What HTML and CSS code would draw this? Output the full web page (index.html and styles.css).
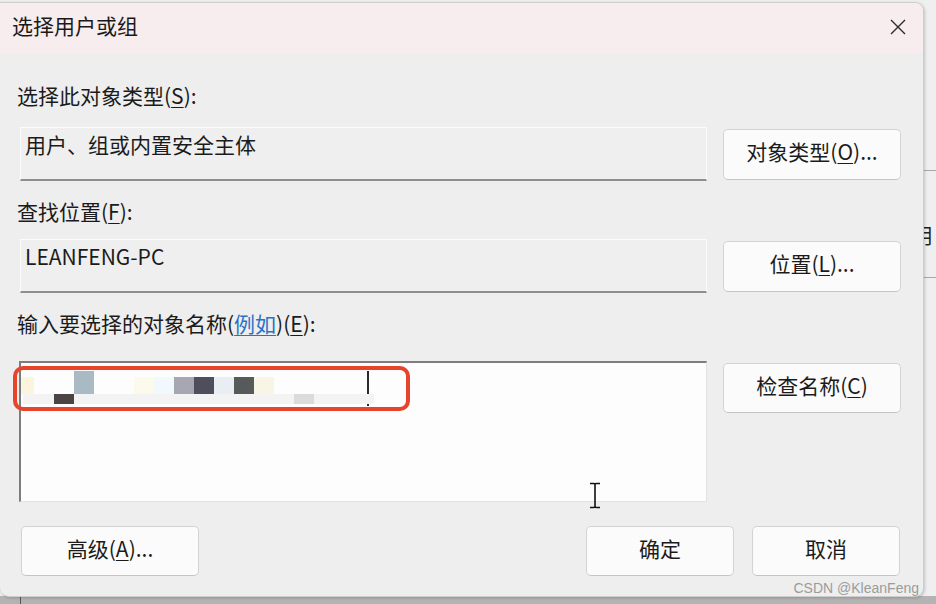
FILE: index.html
```html
<!DOCTYPE html>
<html lang="zh-CN">
<head>
<meta charset="utf-8">
<title>选择用户或组</title>
<link rel="stylesheet" href="styles.css">
</head>
<body>
<div class="desk">
  <div class="backwin">
    <div class="bw-line bw-l1"></div>
    <span class="bw-glyph">用</span>
    <div class="bw-line bw-l2"></div>
  </div>
  <div class="bottom-strip"><div class="bs-mark"></div></div>

  <div class="dialog">
    <div class="titlebar">
      <span class="title">选择用户或组</span>
      <svg class="close" width="18" height="18" viewBox="0 0 18 18"><path d="M2 2 L16 16 M16 2 L2 16" stroke="#2a2a2a" stroke-width="1.4" fill="none"/></svg>
    </div>

    <div class="content">
      <div class="label l1">选择此对象类型(<u>S</u>):</div>
      <div class="row r1">
        <div class="field">用户、组或内置安全主体</div>
        <button class="btn side">对象类型(<u>O</u>)...</button>
      </div>

      <div class="label l2">查找位置(<u>F</u>):</div>
      <div class="row r2">
        <div class="field">LEANFENG-PC</div>
        <button class="btn side">位置(<u>L</u>)...</button>
      </div>

      <div class="label l3">输入要选择的对象名称(<a class="link">例如</a>)(<u>E</u>):</div>
      <div class="row r3">
        <div class="textarea">
          <div class="mosaic">
            <div class="strip"></div>
            <div class="m m1"></div>
            <div class="m m4"></div>
            <div class="m m7"></div>
            <div class="m m8"></div>
            <div class="m m9"></div>
            <div class="m m10"></div>
            <div class="m m11"></div>
            <div class="m m12"></div>
            <div class="m m13"></div>
            <div class="m b3"></div>
            <div class="m b15"></div>
          </div>
        </div>
        <button class="btn side top">检查名称(<u>C</u>)</button>
      </div>

      <div class="footer">
        <button class="btn wide">高级(<u>A</u>)...</button>
        <div class="spacer"></div>
        <button class="btn narrow">确定</button>
        <button class="btn narrow">取消</button>
      </div>
    </div>

    <div class="redbox"></div>
    <svg class="ibeam" width="14" height="27" viewBox="0 0 14 27"><path d="M2 1.5 H6 Q7 1.5 7 3 Q7 1.5 8 1.5 H12 M7 3 V24 M2 25.5 H6 Q7 25.5 7 24 Q7 25.5 8 25.5 H12" stroke="#111" stroke-width="1.6" fill="none"/></svg>
    <div class="watermark">CSDN @KleanFeng</div>
  </div>
</div>
</body>
</html>
```

FILE: styles.css
```css
html, body {
  margin: 0;
  padding: 0;
}
body {
  width: 936px;
  height: 604px;
  overflow: hidden;
  font-family: "Noto Sans CJK SC", "Noto Sans", sans-serif;
  color: #1b1b1b;
}
.desk {
  position: relative;
  width: 936px;
  height: 604px;
  background: #eeeeee;
  overflow: hidden;
}
.backwin {
  position: absolute;
  left: 924px;
  top: 0;
  width: 12px;
  height: 604px;
  background: #efefef;
}
.bw-line {
  position: absolute;
  left: 0;
  width: 12px;
  height: 1px;
  background: #a8a8a8;
}
.bw-l1 { top: 170px; }
.bw-l2 { top: 277px; }
.bw-glyph {
  position: absolute;
  left: -12px;
  top: 219px;
  font-size: 21px;
  line-height: 30px;
  color: #222;
}
.bottom-strip {
  position: absolute;
  left: 0;
  top: 596px;
  width: 936px;
  height: 8px;
  background: #b3b3b3;
}
.bs-mark {
  position: absolute;
  left: 20px;
  top: 1px;
  width: 1px;
  height: 7px;
  background: #555;
}
.dialog {
  position: absolute;
  left: 0;
  top: 2px;
  width: 923px;
  height: 593px;
  background: #eeeeee;
  border: 1px solid #cdcdcd;
  border-left: none;
  border-radius: 0 9px 9px 9px;
  box-shadow: 1px 1px 3px rgba(0, 0, 0, 0.18);
  overflow: hidden;
}
.titlebar {
  height: 50px;
  box-sizing: border-box;
  background: #f7ecee;
  display: flex;
  align-items: center;
  justify-content: space-between;
  padding: 0 16px 2px 12px;
}
.title {
  font-size: 21px;
  line-height: 30px;
  padding-bottom: 4px;
  color: #1a1a1a;
}
.close {
  display: block;
}
.content {
  padding: 0 23px 0 20px;
  display: flex;
  flex-direction: column;
}
.label {
  font-size: 21px;
  line-height: 30px;
  height: 30px;
  margin-left: -3px;
  white-space: nowrap;
}
.label u, .btn u {
  text-decoration: underline;
  text-underline-offset: 3px;
  text-decoration-thickness: 1px;
}
.l1 { margin-top: 27px; }
.l2 { margin-top: 15px; }
.l3 { margin-top: 15px; }
.link {
  color: #2a72c6;
  text-decoration: underline;
  text-underline-offset: 3px;
  text-decoration-thickness: 1px;
}
.row {
  display: grid;
  grid-template-columns: 687px 178px;
  column-gap: 16px;
  align-items: center;
}
.r1 { margin-top: 17px; }
.r2 { margin-top: 13px; }
.r3 { margin-top: 23px; align-items: start; }
.field {
  height: 54px;
  box-sizing: border-box;
  background: #efefef;
  border: 1px solid #fbfbfb;
  border-bottom: 2px solid #8e8e8e;
  padding: 1px 4px 0 4px;
  font-size: 21px;
  line-height: 30px;
  white-space: nowrap;
}
.btn {
  font-family: "Noto Sans CJK SC", "Noto Sans", sans-serif;
  font-size: 21px;
  line-height: 28px;
  color: #1b1b1b;
  background: #fbfbfb;
  border: 1px solid #d3d3d3;
  border-bottom-color: #c4c4c4;
  border-radius: 5px;
  padding: 0 0 6px 0;
  height: 51px;
  white-space: nowrap;
}
.side { width: 178px; }
.side.top { height: 50px; margin-top: 2px; }
.textarea {
  height: 141px;
  box-sizing: border-box;
  margin-left: -1px;
  background: #fdfdfd;
  border-top: 2px solid #7d7d7d;
  border-left: 2px solid #7d7d7d;
  border-right: 1px solid #e2e2e2;
  border-bottom: 1px solid #e2e2e2;
  padding-top: 8px;
}
.mosaic {
  width: 346px;
  height: 35px;
  border-right: 2px solid #2a2a2a;
  display: grid;
  grid-template-columns: 13px repeat(17, 20px);
  grid-template-rows: 6px 17px 10px;
}
.strip { grid-column: 1 / 19; grid-row: 3; background: #f3f3f3; margin-left: 2px; }
.m1 { grid-column: 1; grid-row: 2; background: #fcf5de; }
.m4 { grid-column: 4; grid-row: 1 / 3; background: #a9bac4; }
.m7 { grid-column: 7; grid-row: 2; background: #fcfaea; }
.m8 { grid-column: 8; grid-row: 2; background: #f1f9fd; }
.m9 { grid-column: 9; grid-row: 2; background: #a7a7b3; }
.m10 { grid-column: 10; grid-row: 2; background: #4f4e5c; }
.m11 { grid-column: 11; grid-row: 2; background: #e9eef5; }
.m12 { grid-column: 12; grid-row: 2; background: #565a5b; }
.m13 { grid-column: 13; grid-row: 2; background: #f8f5e6; }
.b3 { grid-column: 3; grid-row: 3; background: #4c4345; }
.b15 { grid-column: 15; grid-row: 3; background: #dbdbdb; }
.footer {
  display: flex;
  margin-top: 24px;
  gap: 18px;
}
.wide { width: 178px; height: 50px; margin-left: 1px; }
.narrow { width: 148px; height: 50px; }
.spacer { flex: 1; }
.redbox {
  position: absolute;
  left: 13px;
  top: 363px;
  width: 389px;
  height: 37px;
  border: 4px solid #e8432b;
  border-radius: 10px;
}
.ibeam {
  position: absolute;
  left: 588px;
  top: 479px;
}
.watermark {
  position: absolute;
  right: 4px;
  top: 576px;
  font-family: "Liberation Sans", Arial, sans-serif;
  font-size: 14px;
  line-height: 18px;
  color: #9c9c9c;
}
```
